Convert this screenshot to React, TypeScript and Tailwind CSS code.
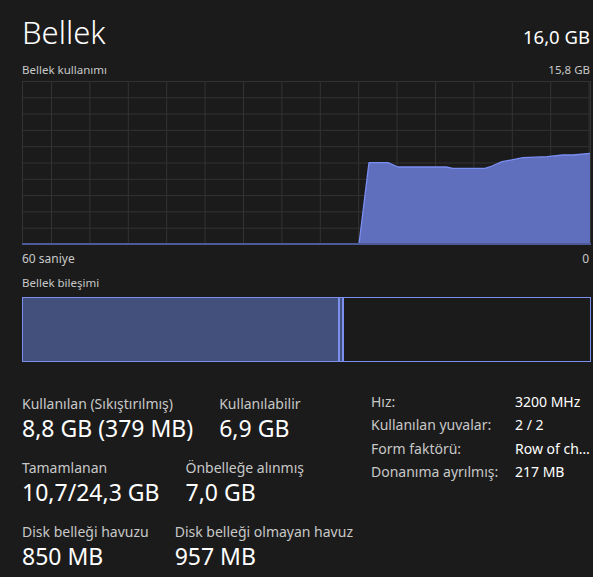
import React from 'react';

// ── Veriler ────────────────────────────────────────────────────────────────
const W = 568;
const H = 163;

const usage: [number, number][] = [
  [0, 163], [337, 163], [347, 81.7], [366, 81.7], [376, 86], [424, 86],
  [431, 87.3], [463, 87.3], [470, 85], [480, 80.7], [501, 76.7], [525, 75.7],
  [541, 74], [551, 74], [568, 72.3],
];

const stats = [
  [
    { label: 'Kullanılan (Sıkıştırılmış)', value: '8,8 GB (379 MB)' },
    { label: 'Kullanılabilir', value: '6,9 GB' },
  ],
  [
    { label: 'Tamamlanan', value: '10,7/24,3 GB' },
    { label: 'Önbelleğe alınmış', value: '7,0 GB' },
  ],
  [
    { label: 'Disk belleği havuzu', value: '850 MB' },
    { label: 'Disk belleği olmayan havuz', value: '957 MB' },
  ],
];

const details = [
  ['Hız:', '3200 MHz'],
  ['Kullanılan yuvalar:', '2 / 2'],
  ['Form faktörü:', 'Row of chips'],
  ['Donanıma ayrılmış:', '217 MB'],
];

// ── Grafik ─────────────────────────────────────────────────────────────────
const UsageChart = () => {
  const vLines = Array.from({ length: 15 }, (_, i) => 29.5 + i * 38.4);
  const hLines = Array.from({ length: 10 }, (_, i) => 0.5 + i * 16.3);
  const line = usage.map(([x, y]) => `${x},${y}`).join(' ');
  const area = `${line} ${W},${H}`;
  return (
    <svg width={W + 1} height={H + 1} viewBox={`0 0 ${W + 1} ${H + 1}`} className="block">
      {hLines.map((y) => (
        <line key={y} x1="0" x2={W} y1={y} y2={y} stroke="#333333" strokeWidth="1" />
      ))}
      {vLines.map((x) => (
        <line key={x} x1={x} x2={x} y1="0" y2={H} stroke="#333333" strokeWidth="1" />
      ))}
      <line x1="0.5" x2="0.5" y1="0" y2={H} stroke="#333333" />
      <line x1={W + 0.5} x2={W + 0.5} y1="0" y2={H} stroke="#333333" />
      <polygon points={area} fill="#5f6ebd" />
      <polyline points={line} fill="none" stroke="#7b8ef2" strokeWidth="1.3" strokeLinejoin="round" />
      <line x1="0" x2={W + 1} y1={H} y2={H} stroke="#4d5a9a" strokeWidth="2" />
    </svg>
  );
};

// ── Sayfa ──────────────────────────────────────────────────────────────────
export default function App() {
  return (
    <div
      className="w-[593px] h-[577px] overflow-hidden bg-[#1b1b1b] text-white pl-[22px] pr-[2px]"
      style={{ fontFamily: '"Noto Sans", "Open Sans", sans-serif' }}
    >
      {/* Başlık */}
      <div className="flex items-end justify-between pt-[7px] h-[52px]">
        <h1 className="text-[31px] leading-[40px] font-light">Bellek</h1>
        <span className="text-[18.5px] leading-[24px] mb-[3px] mr-[1px]">16,0 GB</span>
      </div>

      <div className="flex justify-between text-[11.5px] leading-[15px] text-[#c8c8c8] mt-[10px] mr-[1px]">
        <span>Bellek kullanımı</span>
        <span>15,8 GB</span>
      </div>

      <div className="mt-[4px]">
        <UsageChart />
      </div>

      <div className="flex justify-between text-[12px] leading-[15px] text-[#c8c8c8] mt-[6px] mr-[2px]">
        <span>60 saniye</span>
        <span>0</span>
      </div>

      {/* Bileşim */}
      <div className="text-[11.5px] leading-[15px] text-[#c8c8c8] mt-[9px]">Bellek bileşimi</div>
      <div className="mt-[7px] h-[65px] w-[569px] flex border border-[#7b8ff0]">
        <div className="w-[317px] h-full bg-[#44507c] border-r-2 border-[#7b8ff0]" />
        <div className="w-[4px] h-full bg-[#44507c] border-r-2 border-[#7b8ff0]" />
        <div className="flex-1" />
      </div>

      {/* Alt bölüm */}
      <div className="flex mt-[32px]">
        <div className="w-[349px] flex flex-col gap-[14px]">
          {stats.map((row, i) => (
            <div key={i} className="flex gap-[26px]">
              {row.map((s) => (
                <div key={s.label} className="flex flex-col">
                  <span className="text-[14px] leading-[19px] text-[#c8c8c8]">{s.label}</span>
                  <span className="text-[23px] leading-[31px]">{s.value}</span>
                </div>
              ))}
            </div>
          ))}
        </div>
        <div className="flex-1 flex flex-col text-[14px] leading-[23.3px] -mt-[4px]">
          {details.map(([k, v]) => (
            <div key={k} className="flex">
              <span className="w-[144px] text-[#c8c8c8] shrink-0">{k}</span>
              <span className="truncate w-[76px]">{v}</span>
            </div>
          ))}
        </div>
      </div>
    </div>
  );
}
